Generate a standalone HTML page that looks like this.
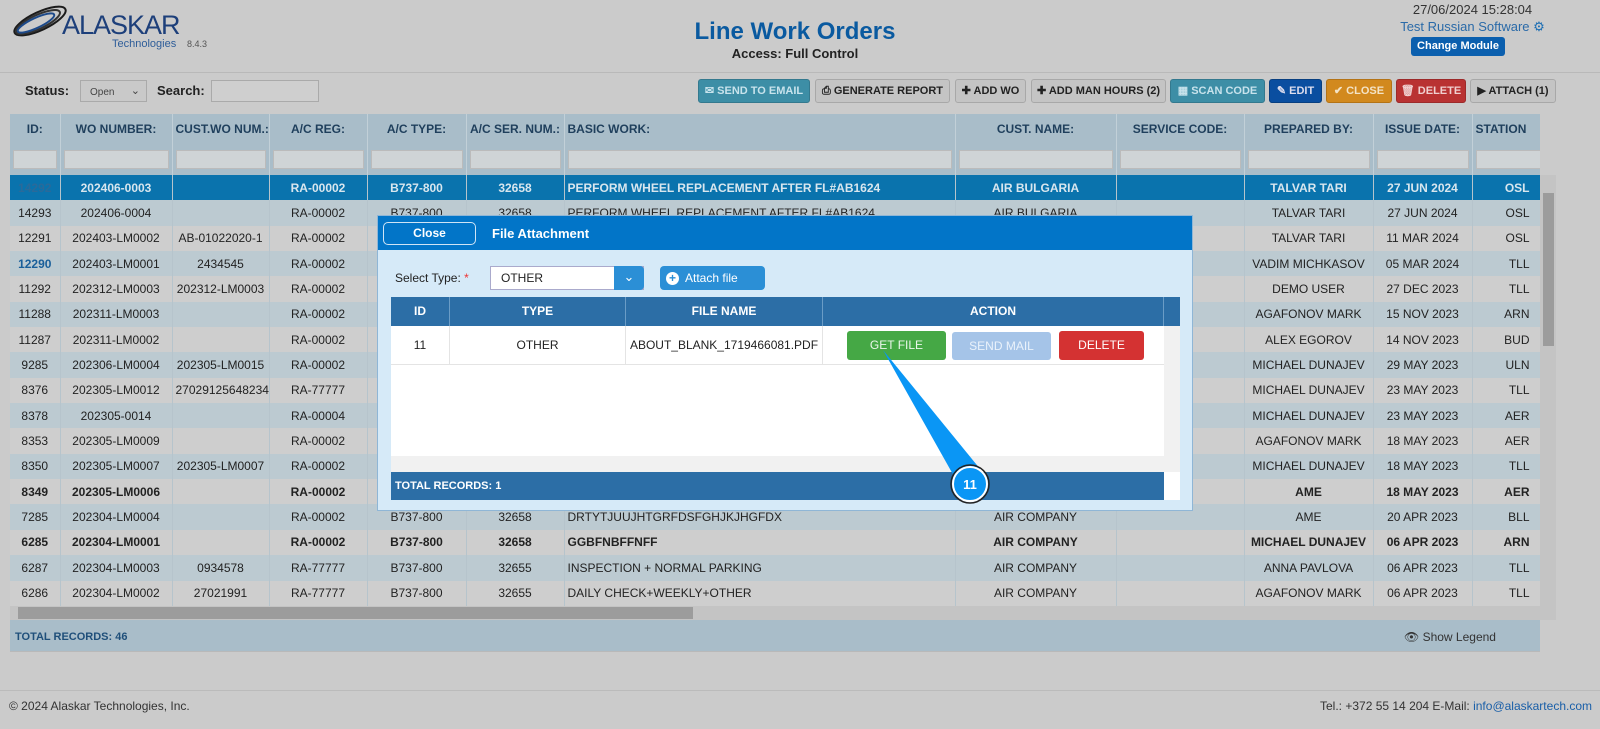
<!DOCTYPE html>
<html><head><meta charset="utf-8">
<style>
*{box-sizing:border-box;margin:0;padding:0}
body{width:1600px;height:729px;background:#cbcbcb;font-family:"Liberation Sans",Arial,sans-serif;font-size:12px;color:#222;position:relative;overflow:hidden}
.abs{position:absolute}
.btn{position:absolute;top:79px;height:24px;border:1px solid #a8a8a8;border-radius:3px;font-size:11px;font-weight:bold;line-height:22px;text-align:center;color:#222;background:#c4c4c4;white-space:nowrap}
#tw{position:absolute;left:10px;top:114px;width:1530px;height:492px;overflow:hidden}
table{border-collapse:collapse;table-layout:fixed}
td,th{border-right:1px solid #b6c4cc;height:25.35px;text-align:center;white-space:nowrap;overflow:hidden;padding:0 3px}
th{height:30px;background:#a9bdc9;color:#1f3f5c;font-size:12px;border-right:1px solid #c2d0d8}
tr.f td{height:31px;background:#a9bdc9;border-right:1px solid #c2d0d8}
tr.f td div{height:19px;background:#cfd4d6;border:1px solid #bbb}
tr.a td{background:#bccad1}
tr.b td{background:#cecece}
tr.s td{background:#0a73ad;color:#d8e6ee;font-weight:bold}
tr.bd td{font-weight:bold}
td.l,th.l{text-align:left}
</style></head><body>
<svg class="abs" style="left:10px;top:4px" width="60" height="34" viewBox="0 0 60 34">
<g fill="none" stroke="#1b1b1b" stroke-width="2">
<ellipse cx="30" cy="17" rx="28" ry="9" transform="rotate(-25 30 17)"/>
<ellipse cx="28" cy="18" rx="24" ry="7" transform="rotate(-25 28 18)" stroke="#333"/>
<ellipse cx="26" cy="19" rx="20" ry="5" transform="rotate(-25 26 19)" stroke="#1d4a8a"/>
</g></svg>
<div class="abs" style="left:62px;top:10px;font-size:27px;color:#1d3f7a;letter-spacing:-1px">ALASKAR</div>
<div class="abs" style="left:112px;top:38px;font-size:11px;color:#2e5d99">Technologies</div>
<div class="abs" style="left:187px;top:39px;font-size:9px;color:#555">8.4.3</div>
<div class="abs" style="left:0;top:18px;width:1590px;text-align:center;font-size:24px;font-weight:bold;color:#0a5aa0">Line Work Orders</div>
<div class="abs" style="left:0;top:46px;width:1590px;text-align:center;font-size:13px;font-weight:bold;color:#222">Access: Full Control</div>
<div class="abs" style="left:1350px;top:2px;width:245px;text-align:center;font-size:13px;color:#333">27/06/2024 15:28:04</div>
<div class="abs" style="left:1350px;top:19px;width:245px;text-align:center;font-size:13px;color:#2a6aa8">Test Russian Software <span style="color:#1b6db3">⚙</span></div>
<div class="abs" style="left:1411px;top:37px;width:94px;height:19px;background:#0b5fae;border-radius:3px;color:#fff;font-size:11px;font-weight:bold;text-align:center;line-height:19px">Change Module</div>
<div class="abs" style="left:0;top:72px;width:1600px;height:1px;background:#b9b9b9"></div>
<div class="abs" style="left:25px;top:83px;font-size:13px;font-weight:bold">Status:</div>
<div class="abs" style="left:80px;top:80px;width:67px;height:22px;border:1px solid #aaa;background:#c9c9c9;font-size:10px;padding:6px 0 0 9px;color:#444">Open <span style="position:absolute;right:6px;top:3px;font-size:11px">⌄</span></div>
<div class="abs" style="left:157px;top:83px;font-size:13px;font-weight:bold">Search:</div>
<div class="abs" style="left:211px;top:80px;width:108px;height:22px;border:1px solid #aaa;background:#cfcfcf"></div>
<div class="btn" style="left:698px;width:112px;background:#3d8ea6;color:#c8e3ec;border-color:#34798e">✉ SEND TO EMAIL</div>
<div class="btn" style="left:815px;width:135px">⎙ GENERATE REPORT</div>
<div class="btn" style="left:955px;width:71px">✚ ADD WO</div>
<div class="btn" style="left:1031px;width:135px">✚ ADD MAN HOURS (2)</div>
<div class="btn" style="left:1170px;width:95px;background:#3d8ea6;color:#c8e3ec;border-color:#34798e">▦ SCAN CODE</div>
<div class="btn" style="left:1269px;width:53px;background:#0a4ea0;color:#dde;border-color:#083f80">✎ EDIT</div>
<div class="btn" style="left:1326px;width:66px;background:#d2891e;color:#f3e3c6;border-color:#b47316">✔ CLOSE</div>
<div class="btn" style="left:1396px;width:70px;background:#b93232;color:#f0d0d0;border-color:#9c2a2a">🗑 DELETE</div>
<div class="btn" style="left:1470px;width:86px">▶ ATTACH (1)</div>

<div id="tw"><table style="width:1580px">
<colgroup><col style="width:50px"><col style="width:112px"><col style="width:97px"><col style="width:98px"><col style="width:99px"><col style="width:98px"><col style="width:391px"><col style="width:161px"><col style="width:128px"><col style="width:129px"><col style="width:99px"><col style="width:98px"><col style="width:32px"></colgroup>
<tr><th>ID:</th><th>WO NUMBER:</th><th>CUST.WO NUM.:</th><th>A/C REG:</th><th>A/C TYPE:</th><th>A/C SER. NUM.:</th><th class="l">BASIC WORK:</th><th>CUST. NAME:</th><th>SERVICE CODE:</th><th>PREPARED BY:</th><th>ISSUE DATE:</th><th class="l">STATION</th><th></th></tr>
<tr class="f"><td><div></div></td><td><div></div></td><td><div></div></td><td><div></div></td><td><div></div></td><td><div></div></td><td><div></div></td><td><div></div></td><td><div></div></td><td><div></div></td><td><div></div></td><td><div></div></td><td></td></tr>
<tr class="s"><td style="color:#2a6a9a">14292</td><td>202406-0003</td><td></td><td>RA-00002</td><td>B737-800</td><td>32658</td><td class="l">PERFORM WHEEL REPLACEMENT AFTER FL#AB1624</td><td>AIR BULGARIA</td><td></td><td>TALVAR TARI</td><td>27 JUN 2024</td><td style="text-align:right;padding-right:40px">OSL</td><td></td></tr>
<tr class="a"><td>14293</td><td>202406-0004</td><td></td><td>RA-00002</td><td>B737-800</td><td>32658</td><td class="l">PERFORM WHEEL REPLACEMENT AFTER FL#AB1624</td><td>AIR BULGARIA</td><td></td><td>TALVAR TARI</td><td>27 JUN 2024</td><td style="text-align:right;padding-right:40px">OSL</td><td></td></tr>
<tr class="b"><td>12291</td><td>202403-LM0002</td><td>AB-01022020-1</td><td>RA-00002</td><td>B737-800</td><td>32658</td><td class="l"></td><td></td><td></td><td>TALVAR TARI</td><td>11 MAR 2024</td><td style="text-align:right;padding-right:40px">OSL</td><td></td></tr>
<tr class="a"><td style="color:#1a5f9a;font-weight:bold">12290</td><td>202403-LM0001</td><td>2434545</td><td>RA-00002</td><td></td><td></td><td></td><td></td><td></td><td>VADIM MICHKASOV</td><td>05 MAR 2024</td><td style="text-align:right;padding-right:40px">TLL</td><td></td></tr>
<tr class="b"><td>11292</td><td>202312-LM0003</td><td>202312-LM0003</td><td>RA-00002</td><td></td><td></td><td></td><td></td><td></td><td>DEMO USER</td><td>27 DEC 2023</td><td style="text-align:right;padding-right:40px">TLL</td><td></td></tr>
<tr class="a"><td>11288</td><td>202311-LM0003</td><td></td><td>RA-00002</td><td></td><td></td><td></td><td></td><td></td><td>AGAFONOV MARK</td><td>15 NOV 2023</td><td style="text-align:right;padding-right:40px">ARN</td><td></td></tr>
<tr class="b"><td>11287</td><td>202311-LM0002</td><td></td><td>RA-00002</td><td></td><td></td><td></td><td></td><td></td><td>ALEX EGOROV</td><td>14 NOV 2023</td><td style="text-align:right;padding-right:40px">BUD</td><td></td></tr>
<tr class="a"><td>9285</td><td>202306-LM0004</td><td>202305-LM0015</td><td>RA-00002</td><td></td><td></td><td></td><td></td><td></td><td>MICHAEL DUNAJEV</td><td>29 MAY 2023</td><td style="text-align:right;padding-right:40px">ULN</td><td></td></tr>
<tr class="b"><td>8376</td><td>202305-LM0012</td><td>27029125648234</td><td>RA-77777</td><td></td><td></td><td></td><td></td><td></td><td>MICHAEL DUNAJEV</td><td>23 MAY 2023</td><td style="text-align:right;padding-right:40px">TLL</td><td></td></tr>
<tr class="a"><td>8378</td><td>202305-0014</td><td></td><td>RA-00004</td><td></td><td></td><td></td><td></td><td></td><td>MICHAEL DUNAJEV</td><td>23 MAY 2023</td><td style="text-align:right;padding-right:40px">AER</td><td></td></tr>
<tr class="b"><td>8353</td><td>202305-LM0009</td><td></td><td>RA-00002</td><td></td><td></td><td></td><td></td><td></td><td>AGAFONOV MARK</td><td>18 MAY 2023</td><td style="text-align:right;padding-right:40px">AER</td><td></td></tr>
<tr class="a"><td>8350</td><td>202305-LM0007</td><td>202305-LM0007</td><td>RA-00002</td><td></td><td></td><td></td><td></td><td></td><td>MICHAEL DUNAJEV</td><td>18 MAY 2023</td><td style="text-align:right;padding-right:40px">TLL</td><td></td></tr>
<tr class="b bd"><td>8349</td><td>202305-LM0006</td><td></td><td>RA-00002</td><td></td><td></td><td></td><td></td><td></td><td>AME</td><td>18 MAY 2023</td><td style="text-align:right;padding-right:40px">AER</td><td></td></tr>
<tr class="a"><td>7285</td><td>202304-LM0004</td><td></td><td>RA-00002</td><td>B737-800</td><td>32658</td><td class="l">DRTYTJUUJHTGRFDSFGHJKJHGFDX</td><td>AIR COMPANY</td><td></td><td>AME</td><td>20 APR 2023</td><td style="text-align:right;padding-right:40px">BLL</td><td></td></tr>
<tr class="b bd"><td>6285</td><td>202304-LM0001</td><td></td><td>RA-00002</td><td>B737-800</td><td>32658</td><td class="l">GGBFNBFFNFF</td><td>AIR COMPANY</td><td></td><td>MICHAEL DUNAJEV</td><td>06 APR 2023</td><td style="text-align:right;padding-right:40px">ARN</td><td></td></tr>
<tr class="a"><td>6287</td><td>202304-LM0003</td><td>0934578</td><td>RA-77777</td><td>B737-800</td><td>32655</td><td class="l">INSPECTION + NORMAL PARKING</td><td>AIR COMPANY</td><td></td><td>ANNA PAVLOVA</td><td>06 APR 2023</td><td style="text-align:right;padding-right:40px">TLL</td><td></td></tr>
<tr class="b"><td>6286</td><td>202304-LM0002</td><td>27021991</td><td>RA-77777</td><td>B737-800</td><td>32655</td><td class="l">DAILY CHECK+WEEKLY+OTHER</td><td>AIR COMPANY</td><td></td><td>AGAFONOV MARK</td><td>06 APR 2023</td><td style="text-align:right;padding-right:40px">TLL</td><td></td></tr>
</table></div>
<div class="abs" style="left:1540px;top:175px;width:16px;height:431px;background:#c4c4c4"></div>
<div class="abs" style="left:1543px;top:193px;width:11px;height:153px;background:#9c9c9c"></div>
<div class="abs" style="left:10px;top:606px;width:1546px;height:14px;background:#c4c4c4"></div>
<div class="abs" style="left:18px;top:607px;width:675px;height:12px;background:#9c9c9c"></div>
<div class="abs" style="left:10px;top:620px;width:1530px;height:32px;background:#a9bdc9;border-bottom:1px solid #b9b9b9"></div>
<div class="abs" style="left:15px;top:631px;font-size:11px;font-weight:bold;color:#1f4f7a">TOTAL RECORDS: 46</div>
<div class="abs" style="left:1404px;top:630px;font-size:12px;color:#333">👁 Show Legend</div>
<div class="abs" style="left:0;top:690px;width:1600px;height:1px;background:#bbb"></div>
<div class="abs" style="left:9px;top:699px;font-size:12px;color:#333">© 2024 Alaskar Technologies, Inc.</div>
<div class="abs" style="right:8px;top:699px;font-size:12px;color:#333">Tel.: +372 55 14 204 E-Mail: <span style="color:#1a5fa8">info@alaskartech.com</span></div>

<div class="abs" style="left:377px;top:215px;width:816px;height:296px;background:#d6eaf8;border:1px solid #8fb6d6">
 <div class="abs" style="left:0;top:0;width:814px;height:34px;background:#0275c8"></div>
 <div class="abs" style="left:5px;top:6px;width:93px;height:23px;border:1px solid #cfe4f5;border-radius:5px;color:#fff;font-size:12px;font-weight:bold;text-align:center;line-height:21px">Close</div>
 <div class="abs" style="left:114px;top:10px;color:#fff;font-size:13px;font-weight:bold">File Attachment</div>
 <div class="abs" style="left:17px;top:55px;font-size:12px;color:#222">Select Type: <span style="color:#e33">*</span></div>
 <div class="abs" style="left:112px;top:50px;width:154px;height:24px;background:#fff;border:1px solid #aac;font-size:12px;padding:4px 0 0 10px">OTHER</div>
 <div class="abs" style="left:236px;top:50px;width:30px;height:24px;background:#2b8fd6;border-radius:0 4px 4px 0;color:#fff;text-align:center;line-height:22px;font-size:13px">⌄</div>
 <div class="abs" style="left:282px;top:50px;width:105px;height:24px;background:#2b8fd6;border-radius:4px;color:#fff;font-size:12px;line-height:24px;padding-left:6px"><span style="display:inline-block;width:13px;height:13px;border-radius:50%;background:#fff;color:#2b8fd6;text-align:center;line-height:13px;font-weight:bold;margin-right:6px">+</span>Attach file</div>
 <div class="abs" style="left:13px;top:81px;width:789px;height:203px;background:#fff"></div>
 <div class="abs" style="left:13px;top:81px;width:789px;height:29px;background:#2c6ea6;color:#fff;font-size:12px;font-weight:bold;line-height:29px">
  <span class="abs" style="left:0;width:58px;text-align:center">ID</span>
  <span class="abs" style="left:58px;width:176px;text-align:center;border-left:1px solid #6a9cc6;height:29px">TYPE</span>
  <span class="abs" style="left:234px;width:197px;text-align:center;border-left:1px solid #6a9cc6;height:29px">FILE NAME</span>
  <span class="abs" style="left:431px;width:342px;text-align:center;border-left:1px solid #6a9cc6;border-right:1px solid #6a9cc6;height:29px">ACTION</span>
 </div>
 <div class="abs" style="left:13px;top:110px;width:773px;height:39px;border-bottom:1px solid #e4e4e4;font-size:12px;line-height:39px">
  <span class="abs" style="left:0;width:58px;text-align:center">11</span>
  <span class="abs" style="left:58px;width:176px;text-align:center;border-left:1px solid #e4e4e4;height:39px">OTHER</span>
  <span class="abs" style="left:234px;width:197px;text-align:center;border-left:1px solid #e4e4e4;height:39px">ABOUT_BLANK_1719466081.PDF</span>
  <span class="abs" style="left:431px;height:39px;border-left:1px solid #e4e4e4"></span>
 </div>
 <div class="abs" style="left:469px;top:115px;width:99px;height:29px;background:#45a845;border-radius:3px;color:#eaf6ea;text-align:center;line-height:29px;font-size:12px">GET FILE</div>
 <div class="abs" style="left:574px;top:116px;width:99px;height:28px;background:#a5c4e8;border-radius:3px;color:#eaf2fb;text-align:center;line-height:28px;font-size:12px">SEND MAIL</div>
 <div class="abs" style="left:681px;top:115px;width:85px;height:29px;background:#d43232;border-radius:3px;color:#fff;text-align:center;line-height:29px;font-size:12px">DELETE</div>
 <div class="abs" style="left:786px;top:110px;width:16px;height:146px;background:#f1f1f1"></div>
 <div class="abs" style="left:13px;top:240px;width:773px;height:16px;background:#f1f1f1"></div>
 <div class="abs" style="left:13px;top:256px;width:773px;height:28px;background:#2c6ea6;color:#fff;font-size:11px;font-weight:bold;line-height:28px;padding-left:4px">TOTAL RECORDS: 1</div>
</div>
<svg class="abs" style="left:0;top:0" width="1600" height="729">
<path d="M883 350 L985 475 L955 478 Z" fill="#0a96f5"/>
<circle cx="970" cy="484" r="17" fill="#0a96f5" stroke="#fff" stroke-width="2"/>
<circle cx="970" cy="484" r="19" fill="none" stroke="#222" stroke-width="1.5"/>
<text x="970" y="489" text-anchor="middle" font-family="Liberation Sans" font-size="13" font-weight="bold" fill="#fff">11</text>
</svg>
</body></html>
